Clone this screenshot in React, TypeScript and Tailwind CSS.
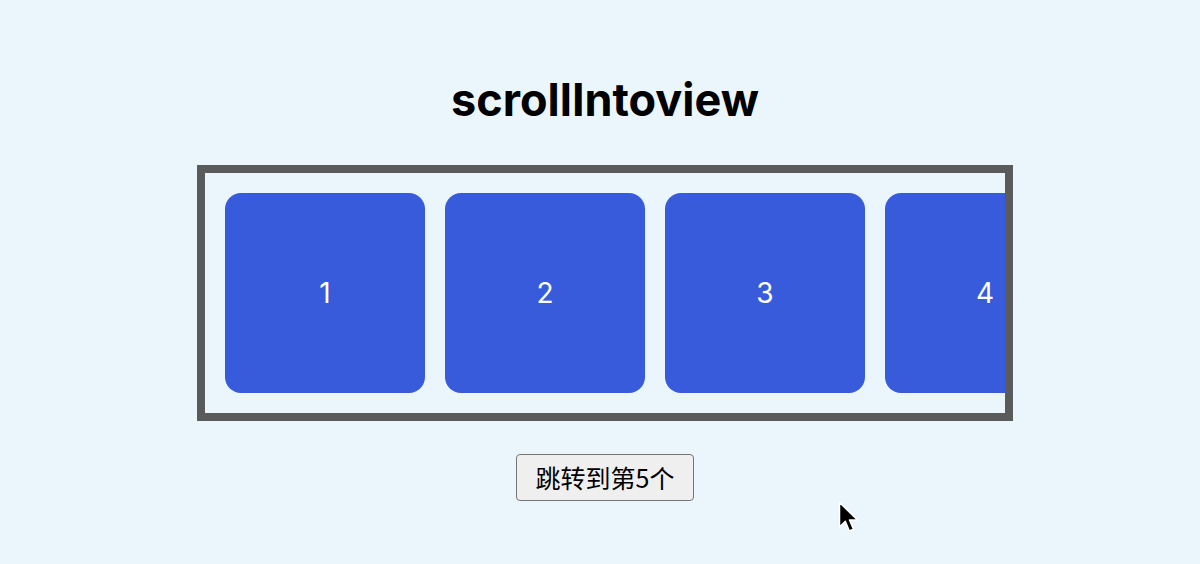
export default function App() {
  const items = [1, 2, 3, 4, 5];
  return (
    <div className="relative min-h-[564px] w-full bg-[#ebf5fc] pl-[10px] font-['Inter','Noto_Sans_CJK_SC',sans-serif]">
      <div className="flex flex-col items-center pt-[70px]">
        <h1 className="text-[45px] leading-[60px] font-bold text-black">scrollIntoview</h1>
        <div className="mt-[35px] h-[256px] w-[816px] border-[8px] border-[#5a5c5c] overflow-hidden">
          <div className="flex gap-5 p-5">
            {items.map((n) => (
              <div
                key={n}
                className="flex h-[200px] w-[200px] shrink-0 items-center justify-center rounded-2xl bg-[#385bdb] text-[28px] text-white"
              >
                {n}
              </div>
            ))}
          </div>
        </div>
        <button className="mt-[33px] h-[47px] rounded-[4px] border border-[#767676] bg-[#efefef] px-[19px] text-[25px] leading-none text-black font-['Noto_Sans_CJK_SC',sans-serif]">
          跳转到第5个
        </button>
      </div>
      <svg className="absolute left-[838px] top-[501px]" width="24" height="36" viewBox="0 0 24 36">
        <path d="M1.5 1.5 L1.5 26 L7.3 20.3 L11.3 30 L15.5 28.2 L11.5 19 L19.5 19 Z" fill="#000" stroke="#fff" strokeWidth="1.5" strokeLinejoin="round" />
      </svg>
    </div>
  );
}
